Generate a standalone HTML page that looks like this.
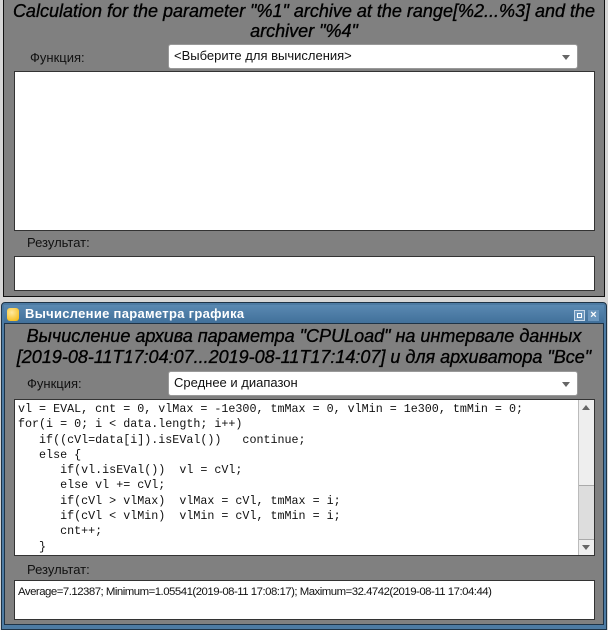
<!DOCTYPE html>
<html><head><meta charset="utf-8"><style>
*{box-sizing:border-box;margin:0;padding:0}
body{width:608px;height:630px;background:#d6d6d6;position:relative;overflow:hidden;font-family:"Liberation Sans",sans-serif}
.a{position:absolute}
.ttl{font-style:italic;font-size:18px;color:#000;text-align:center;line-height:20px;-webkit-text-stroke:0.35px #000}
.lbl{font-size:13px;color:#111}
.cb{background:#fff;border:1px solid #999;border-radius:3px;font-size:13px;padding:3px 0 0 5px;color:#111}
.cb:after{content:"";position:absolute;right:7px;top:10px;border-left:4px solid transparent;border-right:4px solid transparent;border-top:5px solid #666}
.box{background:#fff;border:1px solid #333}
.code{font-family:"Liberation Mono",monospace;font-size:11.7px;line-height:15.3px;white-space:pre;color:#111;padding:2px 0 0 3px;overflow:hidden}
</style></head><body>
<div class="a" style="left:3px;top:0;width:602px;height:297px;background:#808080;border:1px solid #111;border-top:none"></div>
<div class="a ttl" style="left:4px;top:1px;width:600px">Calculation for the parameter "%1" archive at the range[%2...%3] and the<br>archiver "%4"</div>
<div class="a lbl" style="left:30px;top:50px">Функция:</div>
<div class="a cb" style="left:168px;top:44px;width:410px;height:25px">&lt;Выберите для вычисления&gt;</div>
<div class="a box" style="left:14px;top:71px;width:581px;height:160px"></div>
<div class="a lbl" style="left:27px;top:235px">Результат:</div>
<div class="a box" style="left:14px;top:256px;width:581px;height:35px"></div>

<div class="a" style="left:1px;top:302px;width:606px;height:328px;background:#4d7ba3;border:1px solid #1e3346;border-radius:4px 4px 0 0"></div>
<div class="a" style="left:4px;top:305px;width:600px;height:18px;background:linear-gradient(#5a89b2,#41709a)"></div>
<div class="a" style="left:7px;top:308px;width:12px;height:13px;border-radius:3px;background:radial-gradient(circle at 40% 35%,#ffe9a0,#f4b400)"></div>
<div class="a" style="left:25px;top:306px;font-size:13px;font-weight:bold;color:#fff;letter-spacing:0.3px">Вычисление параметра графика</div>
<div class="a" style="left:574px;top:310px;width:11px;height:11px;background:#6b96bd;border:1px solid #c8d8e8"><div class="a" style="left:2px;top:2px;width:5px;height:5px;border:1px solid #fff"></div></div>
<div class="a" style="left:588px;top:310px;width:11px;height:11px;background:#6b96bd;color:#fff;font-size:11px;font-weight:bold;line-height:10px;text-align:center">×</div>
<div class="a" style="left:4px;top:323px;width:600px;height:302px;background:#808080;border:1px solid #1e3346"></div>
<div class="a ttl" style="left:4px;top:326px;width:600px;line-height:21px">Вычисление архива параметра "CPULoad" на интервале данных<br>[2019-08-11T17:04:07...2019-08-11T17:14:07] и для архиватора "Все"</div>
<div class="a lbl" style="left:27px;top:376px">Функция:</div>
<div class="a cb" style="left:168px;top:371px;width:410px;height:25px">Среднее и диапазон</div>
<div class="a box code" style="left:14px;top:399px;width:581px;height:157px">vl = EVAL, cnt = 0, vlMax = -1e300, tmMax = 0, vlMin = 1e300, tmMin = 0;
for(i = 0; i &lt; data.length; i++)
   if((cVl=data[i]).isEVal())   continue;
   else {
      if(vl.isEVal())  vl = cVl;
      else vl += cVl;
      if(cVl &gt; vlMax)  vlMax = cVl, tmMax = i;
      if(cVl &lt; vlMin)  vlMin = cVl, tmMin = i;
      cnt++;
   }
</div>
<div class="a" style="left:578px;top:400px;width:16px;height:155px;background:#eee;border-left:1px solid #bbb"></div>
<div class="a" style="left:579px;top:485px;width:15px;height:55px;background:#ddd;border-top:1px solid #aaa;border-bottom:1px solid #aaa"></div>
<div class="a" style="left:582px;top:405px;border-left:4px solid transparent;border-right:4px solid transparent;border-bottom:5px solid #666"></div>
<div class="a" style="left:582px;top:545px;border-left:4px solid transparent;border-right:4px solid transparent;border-top:5px solid #666"></div>
<div class="a lbl" style="left:27px;top:562px">Результат:</div>
<div class="a box" style="left:14px;top:580px;width:581px;height:40px;font-size:11.4px;padding:5px 0 0 3px;color:#111;letter-spacing:-0.5px">Average=7.12387; Minimum=1.05541(2019-08-11 17:08:17); Maximum=32.4742(2019-08-11 17:04:44)</div>
</body></html>
